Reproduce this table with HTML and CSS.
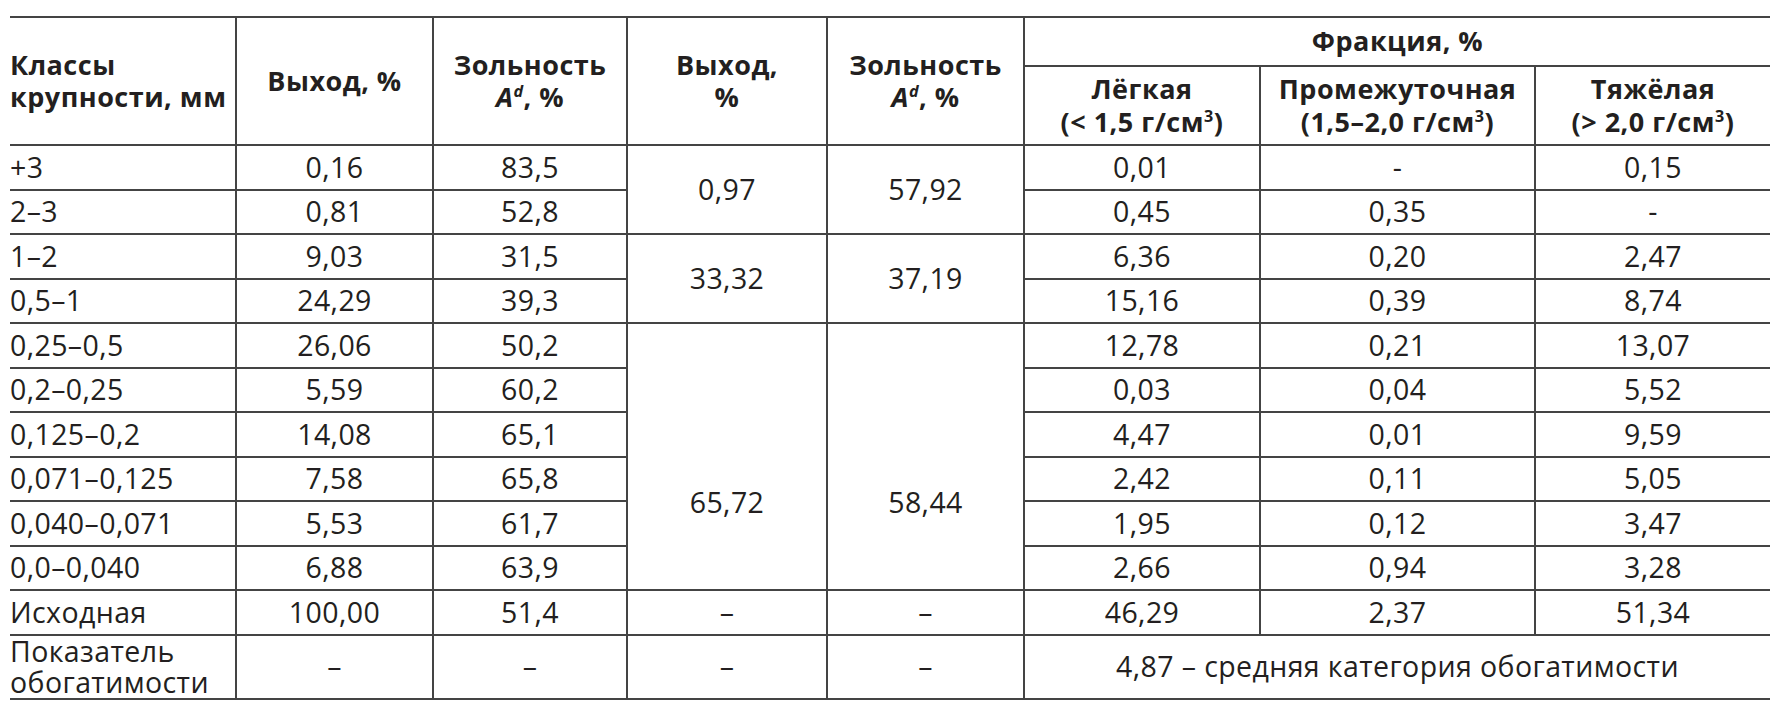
FILE: index.html
```html
<!DOCTYPE html>
<html lang="ru">
<head>
<meta charset="utf-8">
<title>Фракционный состав</title>
<link rel="stylesheet" href="styles.css">
</head>
<body>
<div class="page">
<table class="data">
  <colgroup>
    <col class="c1"><col class="c2"><col class="c3"><col class="c4"><col class="c5"><col class="c6"><col class="c7"><col class="c8">
  </colgroup>
  <thead>
    <tr class="h1">
      <th rowspan="2" class="left">Классы<br>крупности, мм</th>
      <th rowspan="2">Выход, %</th>
      <th rowspan="2">Зольность<br><i>A<sup>d</sup></i>, %</th>
      <th rowspan="2">Выход,<br>%</th>
      <th rowspan="2">Зольность<br><i>A<sup>d</sup></i>, %</th>
      <th colspan="3">Фракция, %</th>
    </tr>
    <tr class="h2">
      <th>Лёгкая<br>(&lt; 1,5 г/см<sup>3</sup>)</th>
      <th>Промежуточная<br>(1,5–2,0 г/см<sup>3</sup>)</th>
      <th>Тяжёлая<br>(&gt; 2,0 г/см<sup>3</sup>)</th>
    </tr>
  </thead>
  <tbody>
    <tr><td class="left">+3</td><td>0,16</td><td>83,5</td><td rowspan="2">0,97</td><td rowspan="2">57,92</td><td>0,01</td><td>-</td><td>0,15</td></tr>
    <tr><td class="left">2–3</td><td>0,81</td><td>52,8</td><td>0,45</td><td>0,35</td><td>-</td></tr>
    <tr><td class="left">1–2</td><td>9,03</td><td>31,5</td><td rowspan="2">33,32</td><td rowspan="2">37,19</td><td>6,36</td><td>0,20</td><td>2,47</td></tr>
    <tr><td class="left">0,5–1</td><td>24,29</td><td>39,3</td><td>15,16</td><td>0,39</td><td>8,74</td></tr>
    <tr><td class="left">0,25–0,5</td><td>26,06</td><td>50,2</td><td rowspan="6" class="low">65,72</td><td rowspan="6" class="low">58,44</td><td>12,78</td><td>0,21</td><td>13,07</td></tr>
    <tr><td class="left">0,2–0,25</td><td>5,59</td><td>60,2</td><td>0,03</td><td>0,04</td><td>5,52</td></tr>
    <tr><td class="left">0,125–0,2</td><td>14,08</td><td>65,1</td><td>4,47</td><td>0,01</td><td>9,59</td></tr>
    <tr><td class="left">0,071–0,125</td><td>7,58</td><td>65,8</td><td>2,42</td><td>0,11</td><td>5,05</td></tr>
    <tr><td class="left">0,040–0,071</td><td>5,53</td><td>61,7</td><td>1,95</td><td>0,12</td><td>3,47</td></tr>
    <tr><td class="left">0,0–0,040</td><td>6,88</td><td>63,9</td><td>2,66</td><td>0,94</td><td>3,28</td></tr>
    <tr><td class="left">Исходная</td><td>100,00</td><td>51,4</td><td>–</td><td>–</td><td>46,29</td><td>2,37</td><td>51,34</td></tr>
    <tr class="last"><td class="left">Показатель<br>обогатимости</td><td>–</td><td>–</td><td>–</td><td>–</td><td colspan="3">4,87 – средняя категория обогатимости</td></tr>
  </tbody>
</table>
</div>
</body>
</html>
```

FILE: styles.css
```css
html, body {
  margin: 0;
  padding: 0;
  background: #ffffff;
}

.page {
  padding: 16px 0 0 10px;
}

.data {
  border-collapse: collapse;
  table-layout: fixed;
  width: 1760px;
  font-family: "Open Sans", "Liberation Sans", sans-serif;
  font-size: 28.5px;
  letter-spacing: 0.4px;
  color: #231f20;
  border-top: 2px solid #444;
  border-bottom: 2px solid #444;
}

.c1 { width: 226px; }
.c2 { width: 197px; }
.c3 { width: 194px; }
.c4 { width: 200px; }
.c5 { width: 197px; }
.c6 { width: 236px; }
.c7 { width: 275px; }
.c8 { width: 235px; }

.data th,
.data td {
  border: 2px solid #444;
  padding: 0 2px;
  text-align: center;
  vertical-align: middle;
  line-height: 1.1;
}

.data th {
  font-weight: 700;
  font-size: 27px;
  letter-spacing: 0.5px;
  line-height: 1.2;
}

.data tr > :first-child {
  border-left: none;
}

.data tr > :last-child {
  border-right: none;
}

.data .left {
  text-align: left;
  padding-left: 0;
}

.data thead .h1 > th + th {
  border-left: 2px solid #444;
}

.data thead .h1 > th.left {
  border-left: none;
}

.data thead .h2 > th:last-child {
  border-right: none;
}

.h1 { height: 49px; }
.h2 { height: 79px; }
.data tbody tr { height: 44.5px; }
.data tbody tr.last { height: 64px; }

.data td.low {
  padding-top: 92px;
}

.data sup {
  font-size: 0.6em;
  line-height: 0;
  vertical-align: 0.6em;
}

.data i {
  font-style: italic;
}
```
